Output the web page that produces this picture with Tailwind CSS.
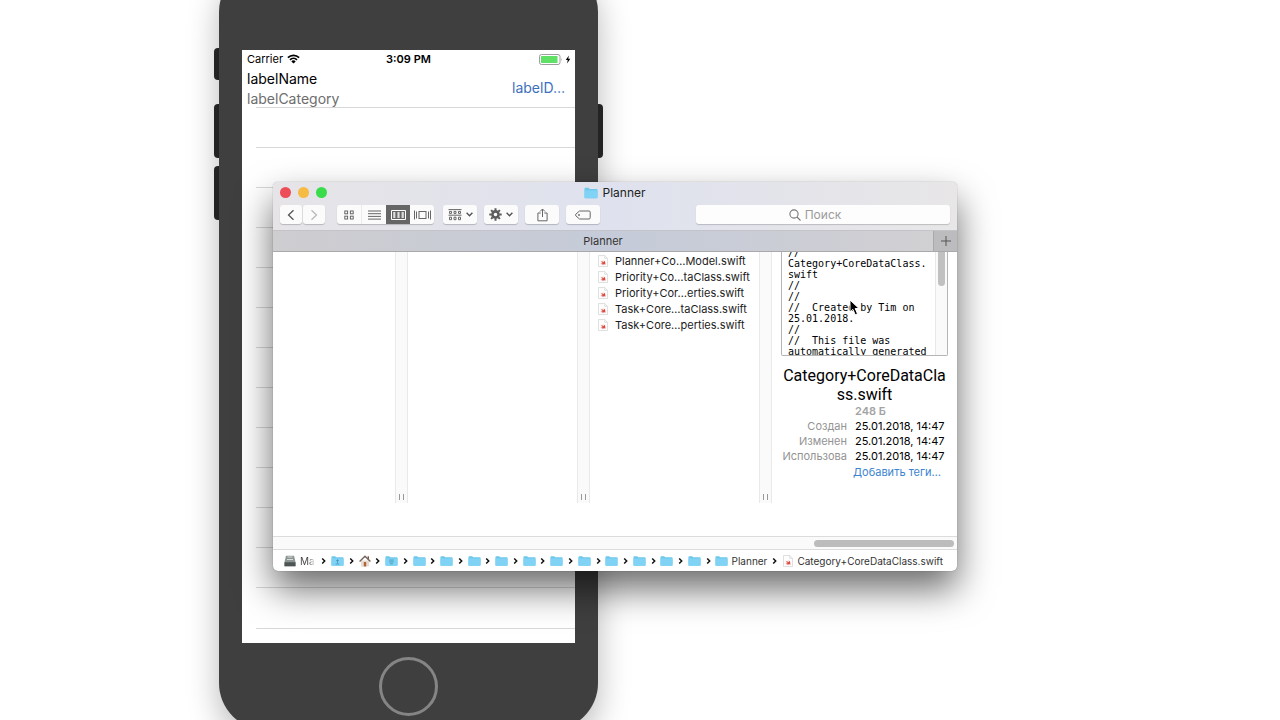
<!DOCTYPE html>
<html lang="ru">
<head>
<meta charset="utf-8">
<title>Planner</title>
<script src="https://cdn.jsdelivr.net/npm/@tailwindcss/browser@4"></script>
</head>
<body class="relative h-screen overflow-hidden bg-white font-['Inter','Noto_Sans',sans-serif] text-black">

<svg class="hidden" aria-hidden="true">
  <symbol id="folder" viewBox="0 0 14 12"><path d="M.5 1.6Q.5.8 1.3.8H4.4L5.8 2H12.7Q13.5 2 13.5 2.8V10.4Q13.5 11.2 12.7 11.2H1.3Q.5 11.2.5 10.4Z" fill="#6fc8ec"/><path d="M.5 3.4H13.5V10.4Q13.5 11.2 12.7 11.2H1.3Q.5 11.2.5 10.4Z" fill="#80d3f5"/></symbol>
  <symbol id="swift" viewBox="0 0 10 12"><path d="M.5.5H6.7L9.5 3.3V11.5H.5Z" fill="#fefefe" stroke="#d2d2d2" stroke-width=".7"/><path d="M6.7.5V3.3H9.5" fill="none" stroke="#d2d2d2" stroke-width=".7"/><path d="M2.500 5.500C3.700 6.700 4.600 7.300 5.200 7.500C4.600 6.900 4.100 6.200 3.800 5.600C4.700 6.400 5.400 6.900 6 7.200C6.100 6.500 5.900 5.900 5.600 5.300C7 6.300 7.500 7.500 7.200 8.500C7.700 9 7.700 9.500 7.500 9.800C7.200 9.300 6.700 9.200 6.200 9.400C4.700 9.900 3.300 9.300 2.400 8.300C3.200 8.600 3.900 8.600 4.600 8.200C3.700 7.400 3 6.500 2.500 5.500Z" fill="#e0483e"/></symbol>
  <symbol id="sep" viewBox="0 0 5 8"><path d="M1.200 1.500L3.700 4L1.200 6.500" fill="none" stroke="#111" stroke-width="1.500"/></symbol>
</svg>

<!-- Simulator -->
<section class="absolute left-[219px] -top-[35px] h-[765px] w-[379px] rounded-[47px] bg-[#3f3f3f] pt-[85px] shadow-[0_12px_32px_rgba(0,0,0,0.28)]" aria-label="iPhone">
  <span class="absolute -left-[5px] top-[83px] -z-10 h-8 w-3 rounded-sm bg-[#292929]"></span>
  <span class="absolute -left-[5px] top-[139px] -z-10 h-[54px] w-3 rounded-sm bg-[#292929]"></span>
  <span class="absolute -left-[5px] top-[201px] -z-10 h-[54px] w-3 rounded-sm bg-[#292929]"></span>
  <span class="absolute -right-[5px] top-[139px] -z-10 h-[54px] w-3 rounded-sm bg-[#292929]"></span>
  <div class="mx-[23px] h-[593px] overflow-hidden bg-white">
    <div class="grid h-[18px] grid-cols-3 items-center px-[5px] text-[11px] leading-[18px]">
      <div class="flex items-center gap-1">Carrier
        <svg class="h-[10px] w-[13px]" viewBox="0 0 13 10"><path d="M.9 3.700A8 8 0 0 1 12.100 3.700M3 5.900A5 5 0 0 1 10 5.900" fill="none" stroke="#000" stroke-width="1.700"/><path d="M6.500 9.600L4.300 7.400A3.200 3.200 0 0 1 8.700 7.400Z"/></svg>
      </div>
      <div class="text-center font-semibold">3:09 PM</div>
      <div class="flex items-center justify-end gap-[2px]">
        <svg class="h-[11px] w-6" viewBox="0 0 24 11"><rect x=".5" y=".5" width="20.500" height="10" rx="2" fill="#fff" stroke="#858585" stroke-width=".8"/><rect x="2" y="2" width="16.500" height="7" rx=".5" fill="#5fe166"/><path d="M22.300 3.800V7.200Q23.300 5.500 22.300 3.800Z" fill="#777"/></svg>
        <svg class="-mr-px h-[9px] w-[6px]" viewBox="0 0 6 10"><path d="M4 .5L.5 5.600H2.700L2 9.500L5.600 4.300H3.300Z"/></svg>
      </div>
    </div>
    <div class="flex h-10 items-center justify-between pl-[5px] pr-[10px] text-sm">
      <div class="pt-px leading-5"><p>labelName</p><p class="text-[#6d6d6d]">labelCategory</p></div>
      <span class="text-[#3d70bc]">labelD…</span>
    </div>
    <div class="-mt-px ml-[14px] divide-y divide-[#d8d8d8] border-y border-[#d8d8d8]">
      <div class="h-10"></div><div class="h-10"></div><div class="h-10"></div><div class="h-10"></div><div class="h-10"></div><div class="h-10"></div><div class="h-10"></div><div class="h-10"></div><div class="h-10"></div><div class="h-10"></div><div class="h-10"></div><div class="h-10"></div><div class="h-10"></div>
    </div>
  </div>
  <button class="mx-auto mt-[14px] block size-[59px] rounded-full border-[3px] border-[#858585]" aria-label="Home"></button>
</section>

<!-- Finder -->
<main class="absolute left-[273px] top-[182px] flex h-[389px] w-[684px] flex-col overflow-hidden rounded-[5px] bg-white text-[11px] shadow-[0_0_1px_rgba(0,0,0,0.5),0_18px_36px_rgba(0,0,0,0.58)]">
  <header class="h-[49px] shrink-0 border-b border-[#c4c4c8] bg-linear-to-r from-[#e6e4e7] via-[#dfe2ee] to-[#e8e6e7]">
    <div class="relative flex h-[21px] items-center justify-center">
      <div class="absolute left-[7px] flex gap-[7px]">
        <button class="size-[11px] rounded-full bg-[#ec4d58]" aria-label="Закрыть"></button>
        <button class="size-[11px] rounded-full bg-[#f6bb43]" aria-label="Свернуть"></button>
        <button class="size-[11px] rounded-full bg-[#3bdc4c]" aria-label="Развернуть"></button>
      </div>
      <h1 class="flex items-center gap-1 text-xs text-[#222]"><svg class="h-3 w-[14px]"><use href="#folder"/></svg>Planner</h1>
    </div>
    <div class="flex h-[23px] items-center px-[7px] text-[#555]">
      <div class="flex gap-px">
        <button class="flex h-[19px] w-[22px] items-center justify-center rounded-[3px] bg-[#fbfbfb] shadow-[0_1px_1px_rgba(0,0,0,0.2)]" aria-label="Назад"><svg class="h-3 w-2" viewBox="0 0 8 12"><path d="M6.500 1.200L1.500 6L6.500 10.800" fill="none" stroke="#555" stroke-width="1.300"/></svg></button>
        <button class="flex h-[19px] w-[22px] items-center justify-center rounded-[3px] bg-[#fbfbfb] shadow-[0_1px_1px_rgba(0,0,0,0.2)]" aria-label="Вперёд"><svg class="h-3 w-2" viewBox="0 0 8 12"><path d="M1.500 1.200L6.500 6L1.500 10.800" fill="none" stroke="#b9b9b9" stroke-width="1.300"/></svg></button>
      </div>
      <div class="ml-3 flex h-[19px] overflow-hidden rounded-[3px] bg-[#fbfbfb] shadow-[0_1px_1px_rgba(0,0,0,0.2)]">
        <button class="flex w-[25px] items-center justify-center border-r border-[#ebebeb]" aria-label="Значки"><svg class="size-[10px]" viewBox="0 0 10 10" fill="none" stroke="#666"><rect x=".8" y="1" width="2.800" height="2.800"/><rect x="6.400" y="1" width="2.800" height="2.800"/><rect x=".8" y="6.200" width="2.800" height="2.800"/><rect x="6.400" y="6.200" width="2.800" height="2.800"/></svg></button>
        <button class="flex w-6 items-center justify-center" aria-label="Список"><svg class="h-[10px] w-[13px]" viewBox="0 0 13 10"><path d="M0 1H13M0 3.700H13M0 6.400H13M0 9.100H13" stroke="#666"/></svg></button>
        <button class="flex w-6 items-center justify-center bg-[#666]" aria-label="Колонки"><svg class="h-[10px] w-[15px]" viewBox="0 0 15 10"><path d="M.5.5H14.500V9.500H.5Z" fill="none" stroke="#fff"/><path d="M2.200 2H4.400V8H2.200ZM6.400 2H8.600V8H6.400ZM10.600 2H12.800V8H10.600Z" fill="#ddd"/></svg></button>
        <button class="flex w-6 items-center justify-center" aria-label="Cover Flow"><svg class="h-[10px] w-[17px]" viewBox="0 0 17 10" fill="none" stroke="#666"><rect x="5" y="1.500" width="7" height="7"/><path d="M.5.5V9.500M2.500 1.500V8.500M14.500 1.500V8.500M16.500.5V9.500"/></svg></button>
      </div>
      <button class="ml-[9px] flex h-[19px] w-[34px] items-center justify-center gap-1 rounded-[3px] bg-[#fbfbfb] shadow-[0_1px_1px_rgba(0,0,0,0.2)]" aria-label="Группировка">
        <svg class="h-3 w-[14px]" viewBox="0 0 14 12" fill="none" stroke="#666"><path d="M.5.6H13.500M.5 6.200H13.500"/><path d="M1.500 2.400H3.500V4.400H1.500ZM6 2.400H8V4.400H6ZM10.500 2.400H12.500V4.400H10.500ZM1.500 8.200H3.500V10.700H1.500ZM6 8.200H8V10.700H6ZM10.500 8.200H12.500V10.700H10.500Z"/></svg>
        <svg class="h-[5px] w-[7px]" viewBox="0 0 7 5"><path d="M.6.8L3.500 3.800L6.400.8" fill="none" stroke="#555" stroke-width="1.400"/></svg>
      </button>
      <button class="ml-[7px] flex h-[19px] w-[34px] items-center justify-center gap-1 rounded-[3px] bg-[#fbfbfb] shadow-[0_1px_1px_rgba(0,0,0,0.2)]" aria-label="Действия">
        <svg class="size-[13px]" viewBox="0 0 13 13" fill="none" stroke="#5c5c5c"><circle cx="6.500" cy="6.500" r="3.100" stroke-width="2.600"/><path d="M6.500.3V2.500M6.500 10.500V12.700M.3 6.500H2.500M10.500 6.500H12.700M2.100 2.100L3.700 3.700M9.300 9.300L10.900 10.900M2.100 10.900L3.700 9.300M9.300 3.700L10.900 2.100" stroke-width="2"/></svg>
        <svg class="h-[5px] w-[7px]" viewBox="0 0 7 5"><path d="M.6.8L3.500 3.800L6.400.8" fill="none" stroke="#555" stroke-width="1.400"/></svg>
      </button>
      <button class="ml-[7px] flex h-[19px] w-[34px] items-center justify-center rounded-[3px] bg-[#fbfbfb] shadow-[0_1px_1px_rgba(0,0,0,0.2)]" aria-label="Поделиться"><svg class="h-[14px] w-[11px]" viewBox="0 0 11 14"><path d="M3.700 5H.9V12.800H10.100V5H7.300M5.500 9V1.200M3 3.500L5.500 1L8 3.500" fill="none" stroke="#666"/></svg></button>
      <button class="ml-[7px] flex h-[19px] w-[34px] items-center justify-center rounded-[3px] bg-[#fbfbfb] shadow-[0_1px_1px_rgba(0,0,0,0.2)]" aria-label="Теги"><svg class="h-[10px] w-4" viewBox="0 0 16 10"><path d="M4.500 1H14Q15.200 1 15.200 2.200V7.800Q15.200 9 14 9H4.500L.8 5.800Q.3 5 .8 4.200Z" fill="none" stroke="#666"/><circle cx="4" cy="5" r=".9" fill="#666"/></svg></button>
      <label class="relative ml-auto flex h-[19px] w-[254px] items-center rounded-[3px] bg-[#fdfdfd] shadow-[0_1px_1px_rgba(0,0,0,0.18)]">
        <svg class="absolute left-[93px] size-3" viewBox="0 0 12 12" fill="none" stroke="#777" stroke-width="1.100"><circle cx="5" cy="5" r="4.100"/><path d="M8 8L11.500 11.500"/></svg>
        <input type="search" aria-label="Поиск" placeholder="Поиск" class="w-full bg-transparent pl-3 text-center text-xs text-[#333] placeholder-[#9b9b9b] outline-none">
      </label>
    </div>
  </header>
  <div class="flex h-[21px] shrink-0 items-stretch border-b border-[#a9a9a9] bg-linear-to-r from-[#cecdd0] via-[#c5cbd9] to-[#d2d0d2]">
    <button class="flex-1 text-center text-[#333]">Planner</button>
    <button class="flex w-6 items-center justify-center border-l border-[#aaa] bg-[#bcbcbe]" aria-label="Новая вкладка"><svg class="size-[10px]" viewBox="0 0 10 10"><path d="M5 0V10M0 5H10" stroke="#555"/></svg></button>
  </div>

  <div class="flex h-[284px] shrink-0 items-start">
    <div class="w-[122px] shrink-0"></div>
    <div class="flex h-[251px] w-[13px] shrink-0 items-end justify-center gap-[3px] border-x border-[#e9e9e9] bg-[#fafafa] pb-[3px]"><i class="h-[6px] w-px bg-[#999]"></i><i class="h-[6px] w-px bg-[#999]"></i></div>
    <div class="w-[169px] shrink-0"></div>
    <div class="flex h-[251px] w-[13px] shrink-0 items-end justify-center gap-[3px] border-x border-[#e9e9e9] bg-[#fafafa] pb-[3px]"><i class="h-[6px] w-px bg-[#999]"></i><i class="h-[6px] w-px bg-[#999]"></i></div>
    <ul class="w-[169px] shrink-0 whitespace-nowrap pl-2 pt-px leading-4 text-[#1c1c1c]">
      <li class="flex items-center gap-[7px]"><svg class="h-3 w-[10px]"><use href="#swift"/></svg>Planner+Co…Model.swift</li>
      <li class="flex items-center gap-[7px]"><svg class="h-3 w-[10px]"><use href="#swift"/></svg>Priority+Co…taClass.swift</li>
      <li class="flex items-center gap-[7px]"><svg class="h-3 w-[10px]"><use href="#swift"/></svg>Priority+Cor…erties.swift</li>
      <li class="flex items-center gap-[7px]"><svg class="h-3 w-[10px]"><use href="#swift"/></svg>Task+Core…taClass.swift</li>
      <li class="flex items-center gap-[7px]"><svg class="h-3 w-[10px]"><use href="#swift"/></svg>Task+Core…perties.swift</li>
    </ul>
    <div class="flex h-[251px] w-[13px] shrink-0 items-end justify-center gap-[3px] border-x border-[#e9e9e9] bg-[#fafafa] pb-[3px]"><i class="h-[6px] w-px bg-[#999]"></i><i class="h-[6px] w-px bg-[#999]"></i></div>
    <aside class="min-w-0 flex-1 px-[9px]">
      <div class="flex h-[104px] overflow-hidden rounded-b-[2px] border border-t-0 border-[#b5b5b5]">
        <div class="flex min-w-0 flex-1 flex-col justify-end overflow-hidden pl-[6px]">
          <pre class="-mb-[2px] font-['DejaVu_Sans_Mono',monospace] text-[10px] leading-[11px]">//
Category+CoreDataClass.
swift
//
//
//  Created by Tim on
25.01.2018.
//
//  This file was
automatically generated</pre>
        </div>
        <div class="flex w-3 shrink-0 justify-center border-l border-[#e8e8e8] bg-[#fafafa]"><div class="h-[34px] w-[7px] rounded-b-full bg-[#c1c1c1]"></div></div>
      </div>
      <h2 class="mt-[10px] text-center font-['Roboto',sans-serif] text-base leading-[19px]">Category+CoreDataCla<br>ss.swift</h2>
      <dl class="grid grid-cols-[66px_1fr] gap-x-2 whitespace-nowrap leading-[15px]">
        <dt></dt><dd class="font-semibold text-[#a3a3a3]">248 Б</dd>
        <dt class="text-right text-[#939393]">Создан</dt><dd>25.01.2018, 14:47</dd>
        <dt class="text-right text-[#939393]">Изменен</dt><dd>25.01.2018, 14:47</dd>
        <dt class="text-right text-[#939393]">Использова</dt><dd>25.01.2018, 14:47</dd>
      </dl>
      <a href="#" class="mr-[7px] block text-right leading-4 text-[#3c84d0]">Добавить теги…</a>
    </aside>
  </div>

  <div class="flex h-[14px] shrink-0 items-center justify-end border-y border-[#dcdcdc] bg-[#fafafa] pr-[3px]"><div class="h-[7px] w-[140px] rounded-full bg-[#bcbcbc]"></div></div>

  <nav class="flex flex-1 items-center whitespace-nowrap pl-[11px] pr-[14px] pt-px text-[10px] text-[#333]">
    <svg class="h-3 w-3" viewBox="0 0 12 12"><path d="M2 .8H10L11.500 7V11.200H.5V7Z" fill="#8d9694"/><path d="M.5 7.300H11.500V11.200H.5Z" fill="#4d5554"/><path d="M3.500 2H8.500M3 4.500H9" stroke="#dfe5e3" stroke-width=".9"/></svg>
    <span class="ml-1 w-[15px] bg-linear-to-r from-[#444] from-60% to-transparent bg-clip-text text-transparent">Ma</span>
    <svg class="ml-[6px] h-2 w-[5px]"><use href="#sep"/></svg>
    <div class="ml-[5px] flex flex-1 items-center justify-between">
      <svg class="h-3 w-[13px]" viewBox="0 0 14 12"><use href="#folder"/><path d="M7 4.200V8.500M5 9.200H9M5.500 5.500H8.500" stroke="#4295bd" stroke-width=".9"/></svg>
      <svg class="h-2 w-[5px]"><use href="#sep"/></svg>
      <svg class="h-3 w-3" viewBox="0 0 12 12"><path d="M2 5.500H10V11.500H2Z" fill="#e6ddd0"/><path d="M8.600 1.200H10V4H8.600Z" fill="#8c5a3c"/><path d="M.6 6.500L6 1.200L11.400 6.500" fill="none" stroke="#76685f" stroke-width="1.500"/><path d="M4.800 7H7.200V11.500H4.800Z" fill="#b0653a"/></svg>
      <svg class="h-2 w-[5px]"><use href="#sep"/></svg>
      <svg class="h-3 w-[13px]" viewBox="0 0 14 12"><use href="#folder"/><path d="M4.500 5H9.500M4.500 7H9.500M5.500 9H8.500" stroke="#4295bd" stroke-width=".9"/></svg>
      <svg class="h-2 w-[5px]"><use href="#sep"/></svg>
      <svg class="h-3 w-[13px]"><use href="#folder"/></svg><svg class="h-2 w-[5px]"><use href="#sep"/></svg>
      <svg class="h-3 w-[13px]"><use href="#folder"/></svg><svg class="h-2 w-[5px]"><use href="#sep"/></svg>
      <svg class="h-3 w-[13px]"><use href="#folder"/></svg><svg class="h-2 w-[5px]"><use href="#sep"/></svg>
      <svg class="h-3 w-[13px]"><use href="#folder"/></svg><svg class="h-2 w-[5px]"><use href="#sep"/></svg>
      <svg class="h-3 w-[13px]"><use href="#folder"/></svg><svg class="h-2 w-[5px]"><use href="#sep"/></svg>
      <svg class="h-3 w-[13px]"><use href="#folder"/></svg><svg class="h-2 w-[5px]"><use href="#sep"/></svg>
      <svg class="h-3 w-[13px]"><use href="#folder"/></svg><svg class="h-2 w-[5px]"><use href="#sep"/></svg>
      <svg class="h-3 w-[13px]"><use href="#folder"/></svg><svg class="h-2 w-[5px]"><use href="#sep"/></svg>
      <svg class="h-3 w-[13px]"><use href="#folder"/></svg><svg class="h-2 w-[5px]"><use href="#sep"/></svg>
      <svg class="h-3 w-[13px]"><use href="#folder"/></svg><svg class="h-2 w-[5px]"><use href="#sep"/></svg>
      <svg class="h-3 w-[13px]"><use href="#folder"/></svg><svg class="h-2 w-[5px]"><use href="#sep"/></svg>
      <svg class="h-3 w-[13px]"><use href="#folder"/></svg>
    </div>
    <span class="ml-[3px]">Planner</span>
    <svg class="ml-[5px] h-2 w-[5px]"><use href="#sep"/></svg>
    <svg class="ml-[6px] h-3 w-[10px]"><use href="#swift"/></svg>
    <span class="ml-[4px]">Category+CoreDataClass.swift</span>
  </nav>
</main>

<svg class="absolute left-[849px] top-[299px] h-[18px] w-3" viewBox="0 0 12 18" aria-hidden="true"><path d="M1 1V13L3.900 10.400L6.200 15.800L8.500 14.800L6.200 9.500H10Z" fill="#000" stroke="#fff"/></svg>
</body>
</html>
